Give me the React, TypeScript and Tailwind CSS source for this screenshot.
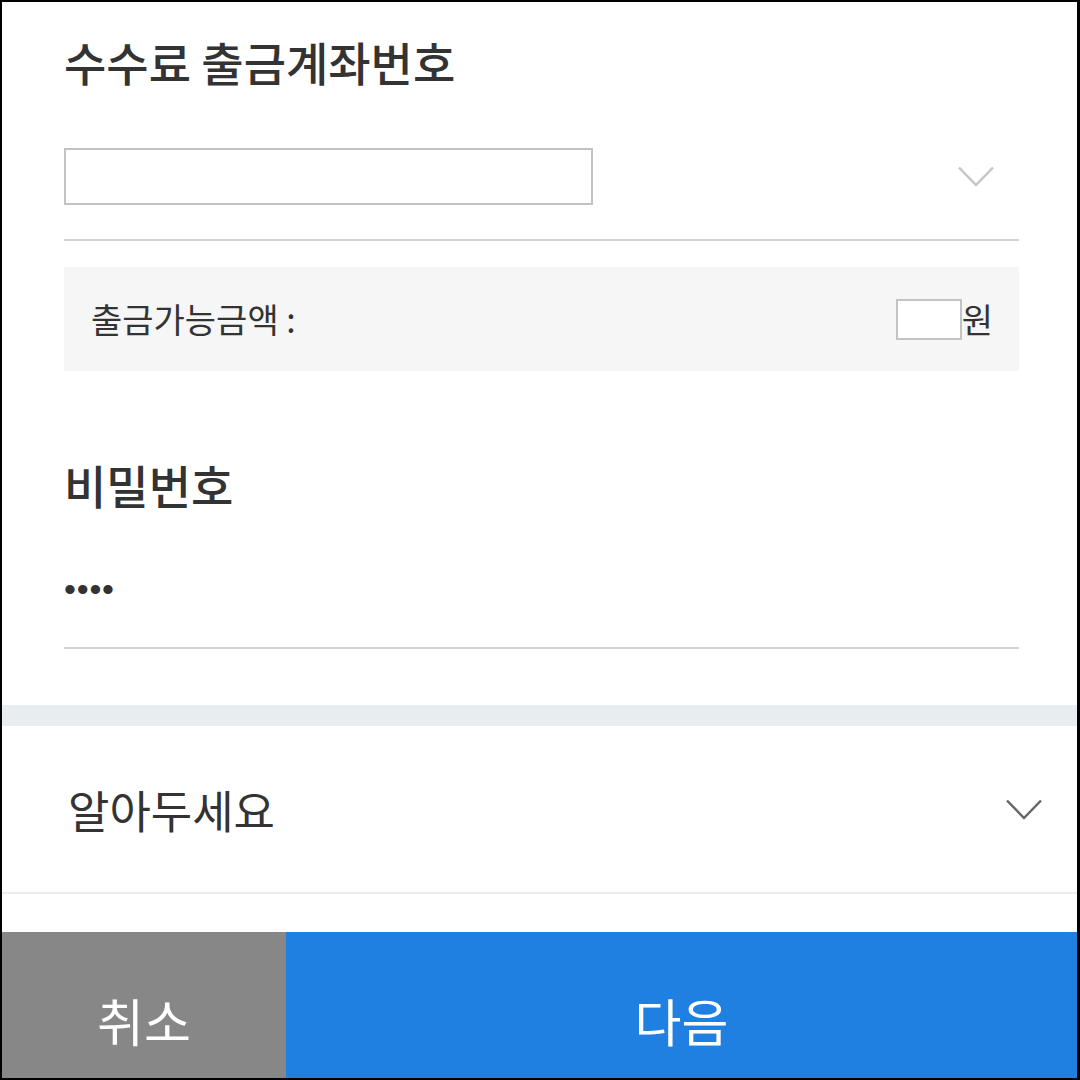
import React from 'react';

const font = { fontFamily: '"Noto Sans CJK KR", "Noto Sans", sans-serif' };

function Chevron({ className }: { className: string }) {
  return (
    <svg viewBox="0 0 36 21" className={className} fill="none" stroke="currentColor" strokeWidth="2.5" strokeLinejoin="miter">
      <path d="M1 1.5 L18 19 L35 1.5" />
    </svg>
  );
}

export default function App() {
  return (
    <div
      className="w-[1080px] h-[1080px] bg-white border-black border-t-2 border-l-2 border-b-2 border-r-[3px] flex flex-col text-[#333333] overflow-hidden"
      style={font}
    >
      <div className="pl-[62px] pr-[58px]">
        <h2 className="mt-[34px] text-[46px] leading-[50px] font-medium">수수료 출금계좌번호</h2>

        <div className="mt-[62px] flex items-center justify-between">
          <div className="w-[529px] h-[57px] border-2 border-[#c3c3c3] bg-white" />
          <Chevron className="w-[36px] h-[21px] mr-[25px] text-[#c6c6c6]" />
        </div>

        <div className="mt-[34px] h-[2px] bg-[#d2d2d2]" />

        <div className="mt-[26px] h-[104px] bg-[#f6f6f6] flex items-center justify-between pl-[27px] pr-[26px]">
          <span className="text-[34px] leading-none">출금가능금액 :</span>
          <div className="flex items-center">
            <div className="w-[66px] h-[41px] border-2 border-[#c3c3c3] bg-white" />
            <span className="text-[34px] leading-none">원</span>
          </div>
        </div>

        <h2 className="mt-[88px] text-[46px] leading-[50px] font-medium">비밀번호</h2>

        <div
          className="mt-[60px] h-[40px] text-[34px] leading-[40px] tracking-[0.8px]"
          style={{ fontFamily: '"Liberation Sans", sans-serif' }}
        >
          ••••
        </div>

        <div className="mt-[38px] h-[2px] bg-[#d2d2d2]" />
      </div>

      <div className="mt-[56px] h-[21px] bg-[#e8edf0]" />

      <div className="h-[168px] flex items-center justify-between pl-[66px] pr-[35px] border-b-2 border-[#ececec]">
        <span className="text-[45px] leading-none">알아두세요</span>
        <Chevron className="w-[36px] h-[21px] text-[#666666]" />
      </div>

      <div className="flex-1" />

      <div className="h-[146px] flex">
        <button className="w-[284px] h-full pt-[30px] bg-[#878787] text-white text-[51px] leading-none flex items-center justify-center">
          취소
        </button>
        <button className="flex-1 h-full pt-[30px] bg-[#1f80e1] text-white text-[51px] leading-none flex items-center justify-center">
          다음
        </button>
      </div>
    </div>
  );
}
